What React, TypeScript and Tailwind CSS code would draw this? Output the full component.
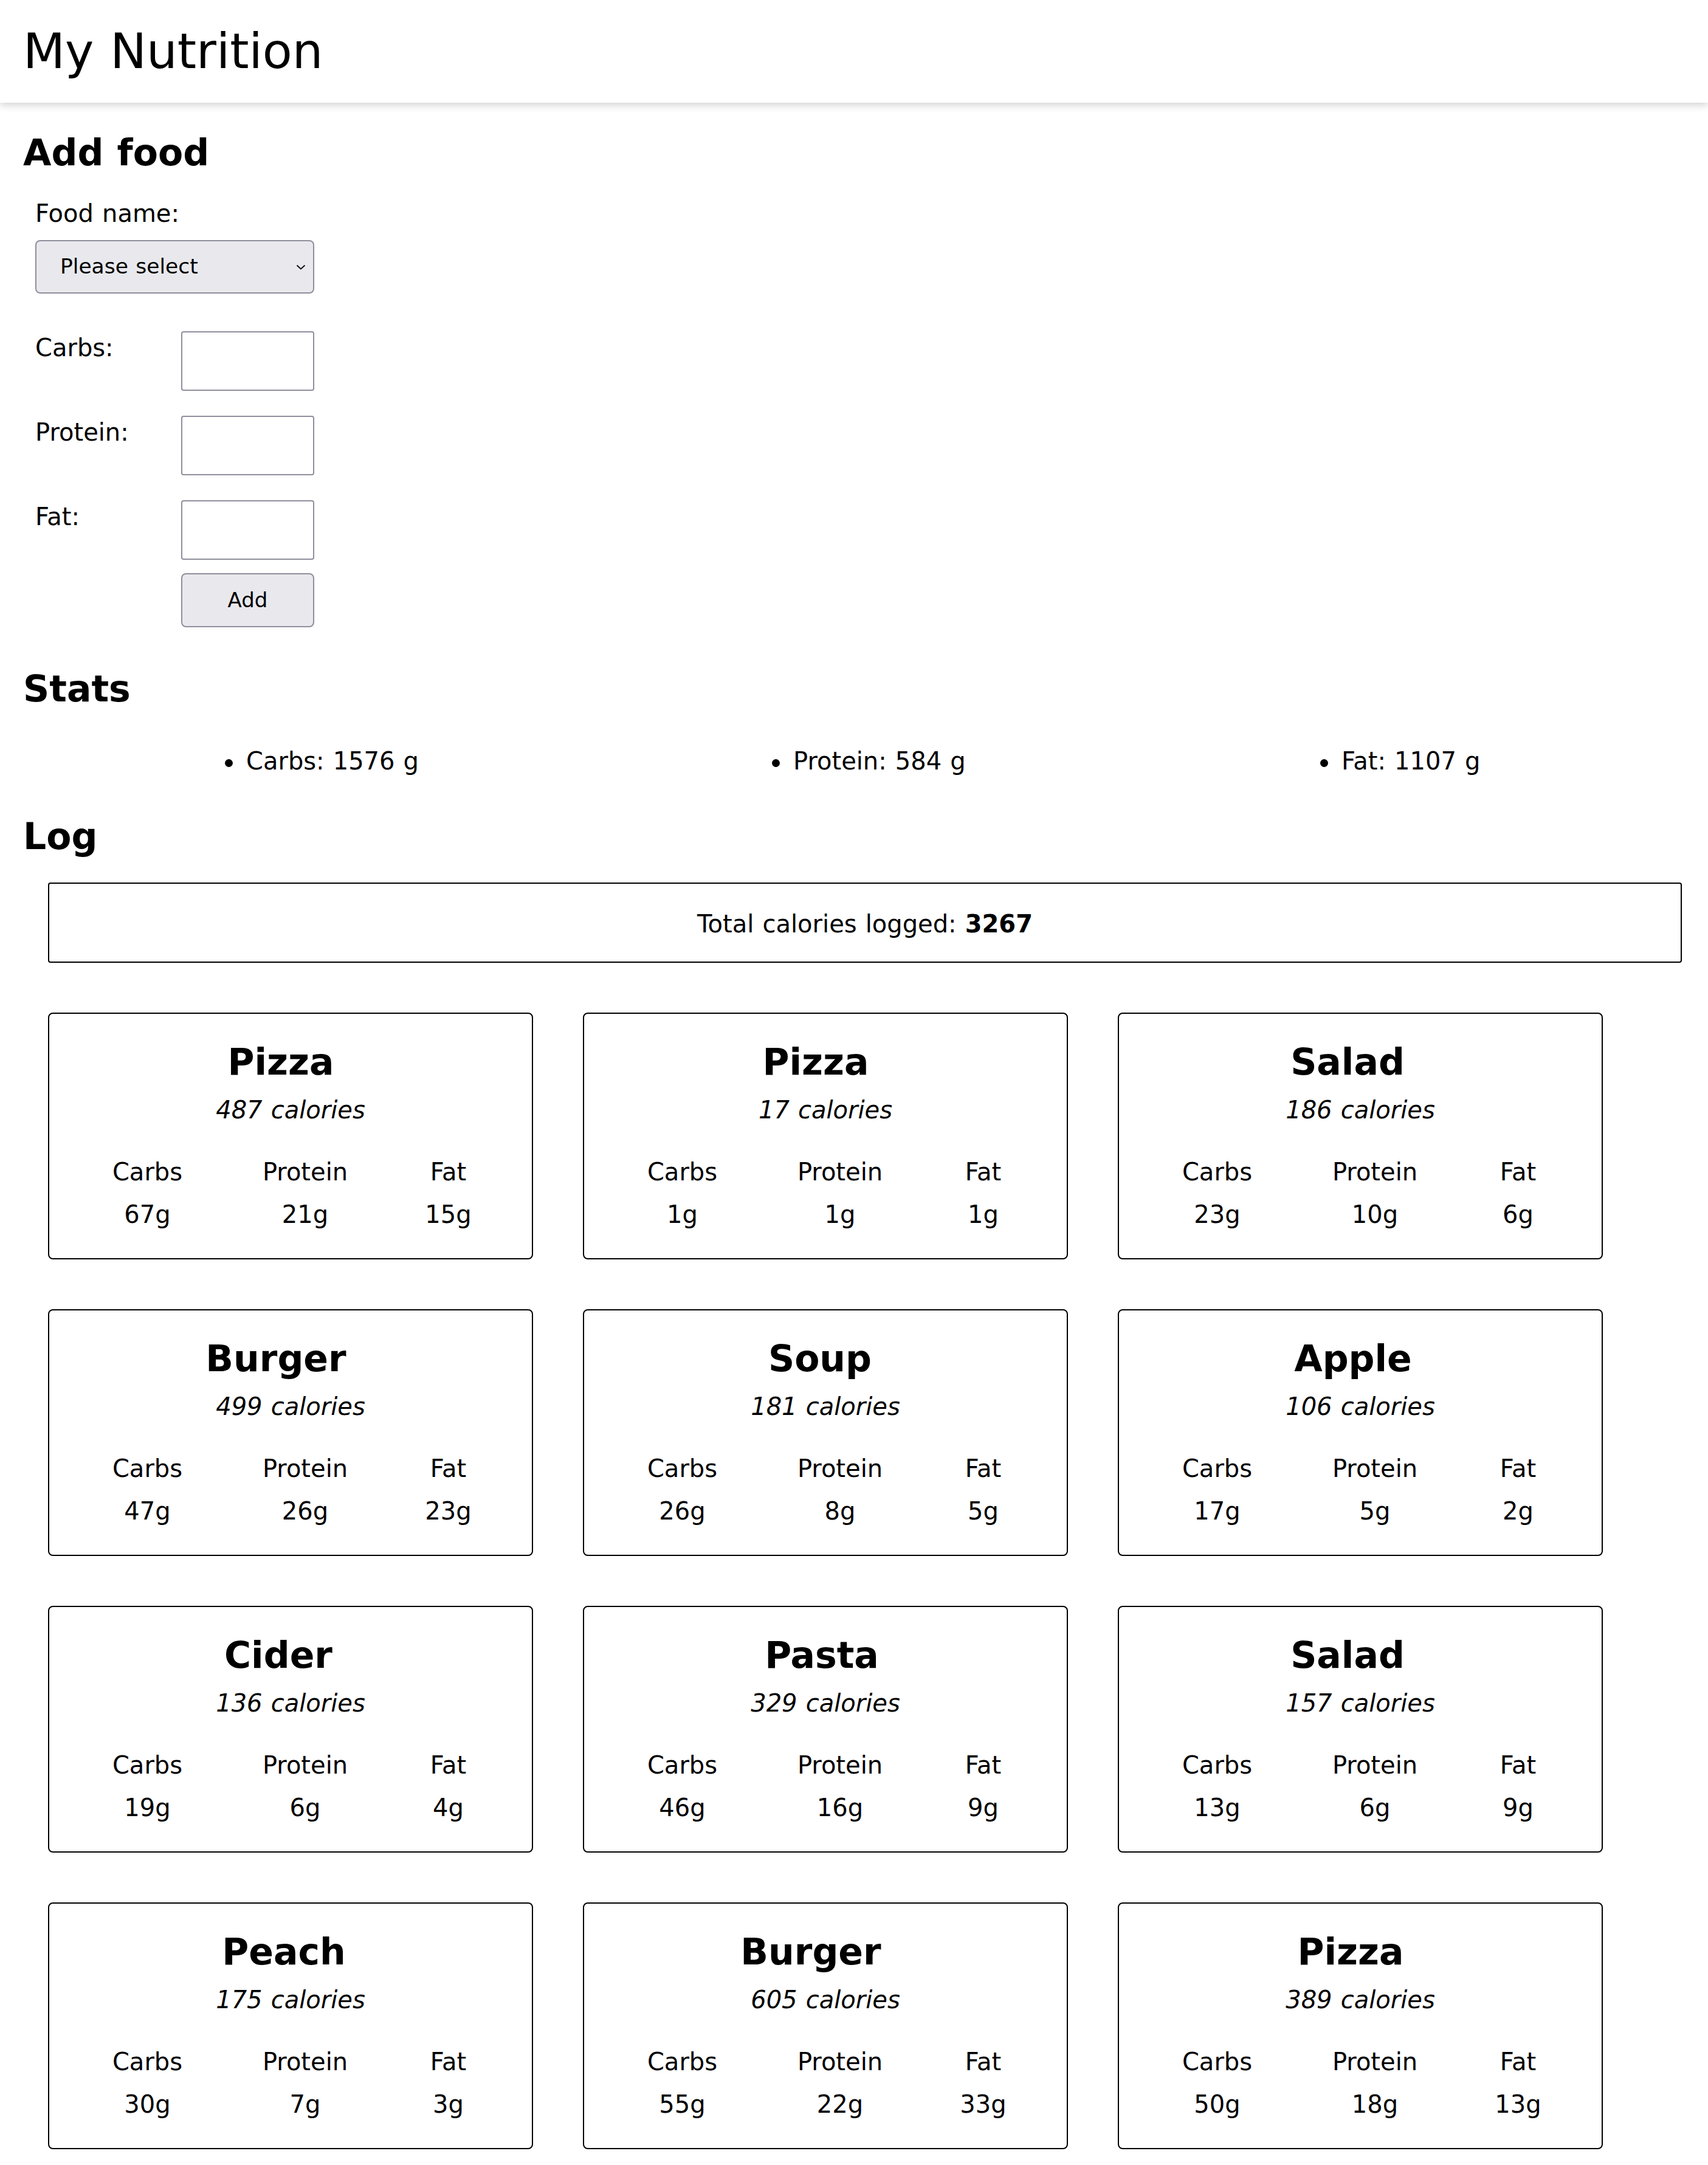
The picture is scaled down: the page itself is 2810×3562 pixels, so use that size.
import React from "react";

type Food = { name: string; cal: number; c: number; p: number; f: number };

const foods: Food[] = [
  { name: "Pizza", cal: 487, c: 67, p: 21, f: 15 },
  { name: "Pizza", cal: 17, c: 1, p: 1, f: 1 },
  { name: "Salad", cal: 186, c: 23, p: 10, f: 6 },
  { name: "Burger", cal: 499, c: 47, p: 26, f: 23 },
  { name: "Soup", cal: 181, c: 26, p: 8, f: 5 },
  { name: "Apple", cal: 106, c: 17, p: 5, f: 2 },
  { name: "Cider", cal: 136, c: 19, p: 6, f: 4 },
  { name: "Pasta", cal: 329, c: 46, p: 16, f: 9 },
  { name: "Salad", cal: 157, c: 13, p: 6, f: 9 },
  { name: "Peach", cal: 175, c: 30, p: 7, f: 3 },
  { name: "Burger", cal: 605, c: 55, p: 22, f: 33 },
  { name: "Pizza", cal: 389, c: 50, p: 18, f: 13 },
];

const titlePad: Record<string, string> = {
  Pizza: "pr-[32px]",
  Salad: "pr-[42px]",
  Burger: "pr-[48px]",
  Soup: "pr-[18px]",
  Apple: "pr-[24px]",
  Cider: "pr-[40px]",
  Pasta: "pr-[12px]",
  Peach: "pr-[22px]",
};

function Card({ food }: { food: Food }) {
  return (
    <div className="w-[798px] h-[406px] border-2 border-black rounded-[8px] flex flex-col">
      <h3
        className={
          "mt-[44px] text-center text-[60px] leading-[70px] font-bold " +
          titlePad[food.name]
        }
      >
        {food.name}
      </h3>
      <div className="mt-[20px] text-center italic leading-[48px]">
        {food.cal} calories
      </div>
      <div className="mt-[54px] grid grid-cols-[323px_196px_275px] text-center leading-[48px]">
        <div>Carbs</div>
        <div>Protein</div>
        <div>Fat</div>
        <div className="mt-[22px]">{food.c}g</div>
        <div className="mt-[22px]">{food.p}g</div>
        <div className="mt-[22px]">{food.f}g</div>
      </div>
    </div>
  );
}

function FieldRow({ label, last }: { label: string; last?: boolean }) {
  return (
    <div className={"flex items-start " + (last ? "" : "mb-[41px]")}>
      <label className="w-[240px] ml-[2px] mt-[3px] leading-[48px]">{label}</label>
      <div className="w-[219px] h-[98px] border-2 border-[#8f8f9d] rounded-[4px] bg-white" />
    </div>
  );
}

export default function App() {
  return (
    <div className="min-h-screen bg-white text-black text-[40px] [word-spacing:1.4px] font-['DejaVu_Sans','Verdana',sans-serif]">
      <header className="h-[169px] bg-white pl-[38px] pt-[38px] shadow-[0_4px_12px_rgba(0,0,0,0.18)]">
        <h1 className="text-[80px] leading-[94px] font-normal">My Nutrition</h1>
      </header>

      <h2 className="mt-[47px] pl-[38px] text-[60px] leading-[70px] font-bold">Add food</h2>

      <div className="mt-[41px] pl-[56px]">
        <label className="block ml-[2px] leading-[48px]">Food name:</label>
        <div className="mt-[20px] ml-[2px] w-[459px] h-[88px] border-2 border-[#8f8f9d] rounded-[8px] bg-[#e9e9ed] flex items-center justify-between pl-[39px] pr-[12px] text-[34.5px]">
          <span>Please select</span>
          <svg width="16" height="9" viewBox="0 0 16 9" fill="none">
            <polyline points="1.5,1.5 8,7.5 14.5,1.5" stroke="#111" strokeWidth="2" />
          </svg>
        </div>

        <div className="mt-[62px]">
          <FieldRow label="Carbs:" />
          <FieldRow label="Protein:" />
          <FieldRow label="Fat:" last />
          <button className="block mt-[22px] ml-[242px] w-[219px] h-[89px] border-2 border-[#8f8f9d] rounded-[8px] bg-[#e9e9ed] text-[34px] text-black">
            Add
          </button>
        </div>
      </div>

      <h2 className="mt-[66px] pl-[38px] text-[60px] leading-[70px] font-bold">Stats</h2>

      <ul className="mt-[60px] pl-[370px] flex leading-[48px]">
        <li className="w-[900px] flex items-start">
          <span className="mt-[21px] w-[13px] h-[13px] rounded-full bg-black shrink-0" />
          <span className="ml-[22px]">Carbs: 1576 g</span>
        </li>
        <li className="w-[902px] flex items-start">
          <span className="mt-[21px] w-[13px] h-[13px] rounded-full bg-black shrink-0" />
          <span className="ml-[22px]">Protein: 584 g</span>
        </li>
        <li className="flex items-start">
          <span className="mt-[21px] w-[13px] h-[13px] rounded-full bg-black shrink-0" />
          <span className="ml-[22px]">Fat: 1107 g</span>
        </li>
      </ul>

      <h2 className="mt-[65px] pl-[38px] text-[60px] leading-[70px] font-bold">Log</h2>

      <div className="mt-[41px] ml-[79px] w-[2688px] h-[132px] border-2 border-black rounded-[4px] flex items-center justify-center pt-[4px] leading-[48px]">
        <span>
          Total calories logged: <b className="font-bold">3267</b>
        </span>
      </div>

      <div className="mt-[82px] ml-[79px] grid grid-cols-[repeat(3,798px)] gap-[82px]">
        {foods.map((f, i) => (
          <Card key={i} food={f} />
        ))}
      </div>
    </div>
  );
}
